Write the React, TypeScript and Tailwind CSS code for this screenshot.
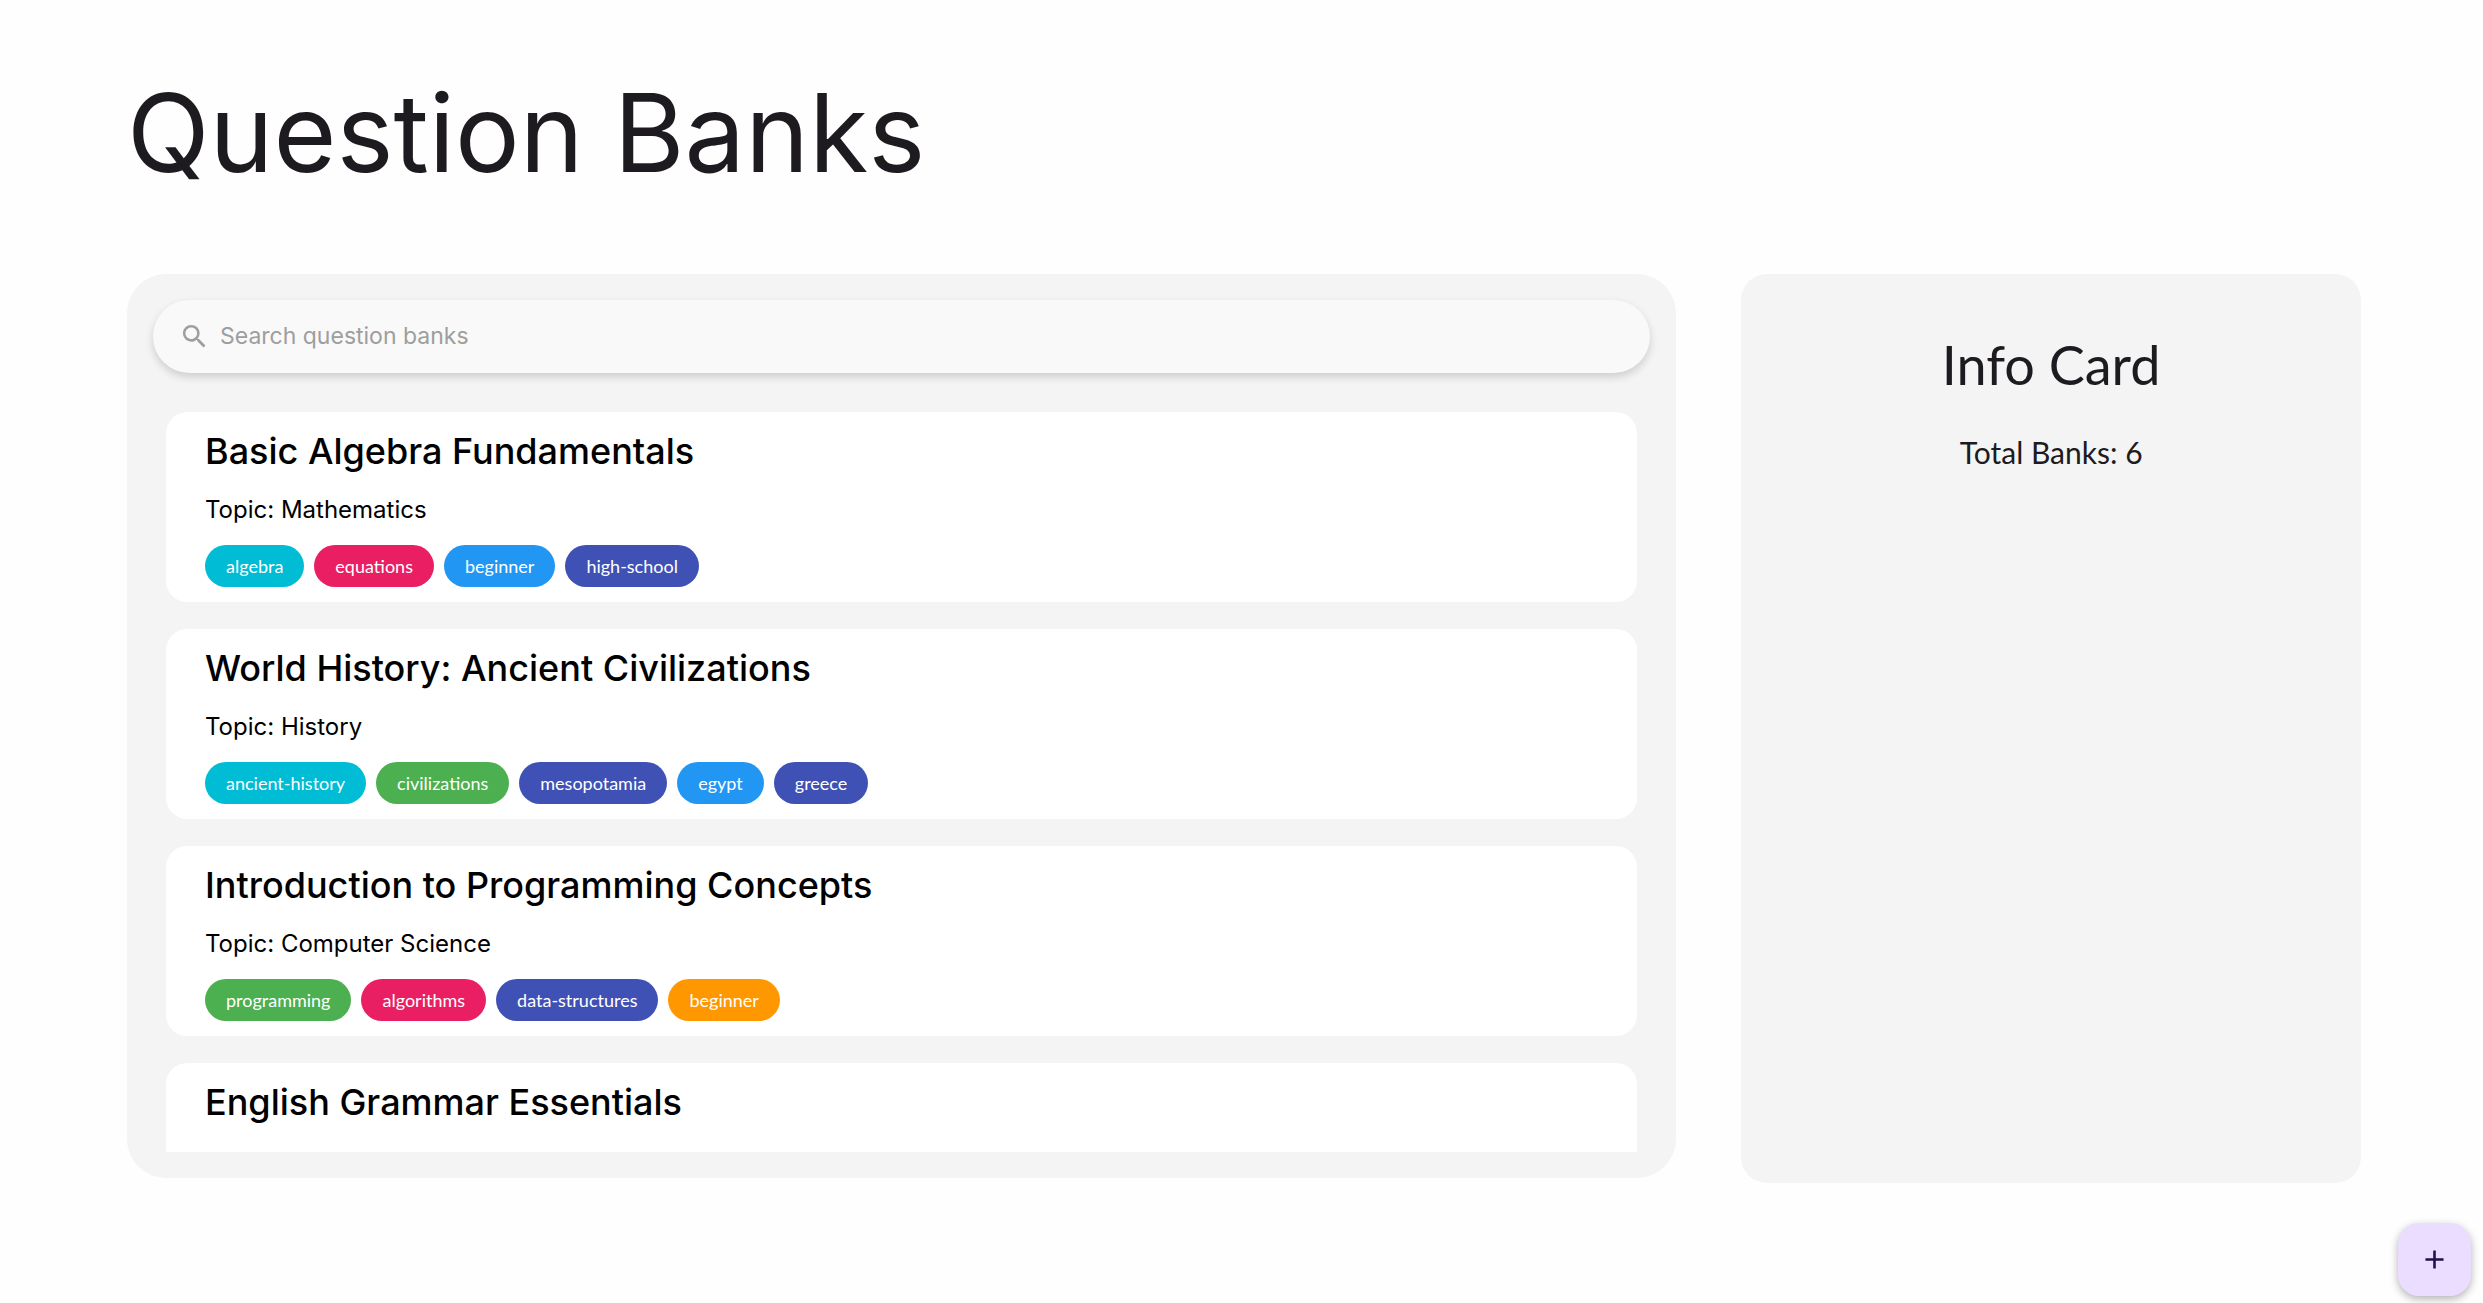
import React from "react";
import { MdAdd, MdSearch } from "react-icons/md";

type Tag = { label: string; color: string };
type Bank = { title: string; topic?: string; tags?: Tag[] };

const CYAN = "bg-[#00bcd4]";
const PINK = "bg-[#e91e63]";
const BLUE = "bg-[#2196f3]";
const INDIGO = "bg-[#3f51b5]";
const GREEN = "bg-[#4caf50]";
const ORANGE = "bg-[#ff9800]";

const banks: Bank[] = [
  {
    title: "Basic Algebra Fundamentals",
    topic: "Mathematics",
    tags: [
      { label: "algebra", color: CYAN },
      { label: "equations", color: PINK },
      { label: "beginner", color: BLUE },
      { label: "high-school", color: INDIGO },
    ],
  },
  {
    title: "World History: Ancient Civilizations",
    topic: "History",
    tags: [
      { label: "ancient-history", color: CYAN },
      { label: "civilizations", color: GREEN },
      { label: "mesopotamia", color: INDIGO },
      { label: "egypt", color: BLUE },
      { label: "greece", color: INDIGO },
    ],
  },
  {
    title: "Introduction to Programming Concepts",
    topic: "Computer Science",
    tags: [
      { label: "programming", color: GREEN },
      { label: "algorithms", color: PINK },
      { label: "data-structures", color: INDIGO },
      { label: "beginner", color: ORANGE },
    ],
  },
  { title: "English Grammar Essentials" },
];

function BankCard({ bank }: { bank: Bank }) {
  return (
    <li className="min-h-[190px] shrink-0 rounded-[21px] bg-white px-[39px] pt-[13px] pb-[15px] text-black">
      <h2 className="text-[36px] leading-[52px] font-medium">{bank.title}</h2>
      {bank.topic && <p className="mt-4 text-[24px] leading-[34px]">Topic: {bank.topic}</p>}
      {bank.tags && (
        <ul className="mt-[18px] flex flex-wrap gap-[10px]">
          {bank.tags.map((tag) => (
            <li
              key={tag.label}
              className={`${tag.color} rounded-[21px] px-[21px] font-['Lato',sans-serif] text-[18px] leading-[42px] text-white`}
            >
              {tag.label}
            </li>
          ))}
        </ul>
      )}
    </li>
  );
}

export default function App() {
  return (
    <div className="flex h-screen flex-col bg-[#fefefe] pt-[55px] pr-[122px] pb-[120px] pl-[127px] font-['Inter',sans-serif] text-[#1d1b20]">
      <h1 className="text-[108px] leading-[156px]">Question Banks</h1>
      <div className="mt-[63px] grid min-h-0 flex-1 grid-cols-[5fr_2fr] grid-rows-[minmax(0,1fr)] gap-[65px]">
        <main className="mb-[5px] flex min-h-0 min-w-0 flex-col rounded-[39px] bg-[#f4f4f4] p-[26px]">
          <label className="flex h-[73px] shrink-0 items-center gap-[10px] rounded-full bg-[#f9f9f9] px-[26px] text-[#9e9e9e] shadow-[0_4px_8px_rgba(0,0,0,0.16)]">
            <MdSearch size={31} aria-hidden="true" />
            <input
              type="text"
              aria-label="Search question banks"
              placeholder="Search question banks"
              className="min-w-0 flex-1 bg-transparent text-[23px] text-[#1d1b20] outline-none placeholder:text-[#9e9e9e]"
            />
          </label>
          <ul className="mx-[13px] mt-[39px] flex min-h-0 flex-1 flex-col gap-[27px] overflow-y-auto rounded-t-[21px] [scrollbar-width:none]">
            {banks.map((bank) => (
              <BankCard key={bank.title} bank={bank} />
            ))}
          </ul>
        </main>
        <aside className="min-w-0 rounded-[26px] bg-[#f4f4f4] pt-[52px] text-center font-['Lato',sans-serif]">
          <h2 className="text-[54px] leading-[78px]">Info Card</h2>
          <p className="mt-6 text-[30px] leading-[48px]">Total Banks: 6</p>
        </aside>
      </div>
      <button
        type="button"
        aria-label="Add question bank"
        className="fixed right-3 bottom-[7px] flex size-[73px] items-center justify-center rounded-[21px] bg-[#eaddff] text-[#21104a] shadow-[0_3px_8px_rgba(0,0,0,0.3)]"
      >
        <MdAdd size={31} />
      </button>
    </div>
  );
}
